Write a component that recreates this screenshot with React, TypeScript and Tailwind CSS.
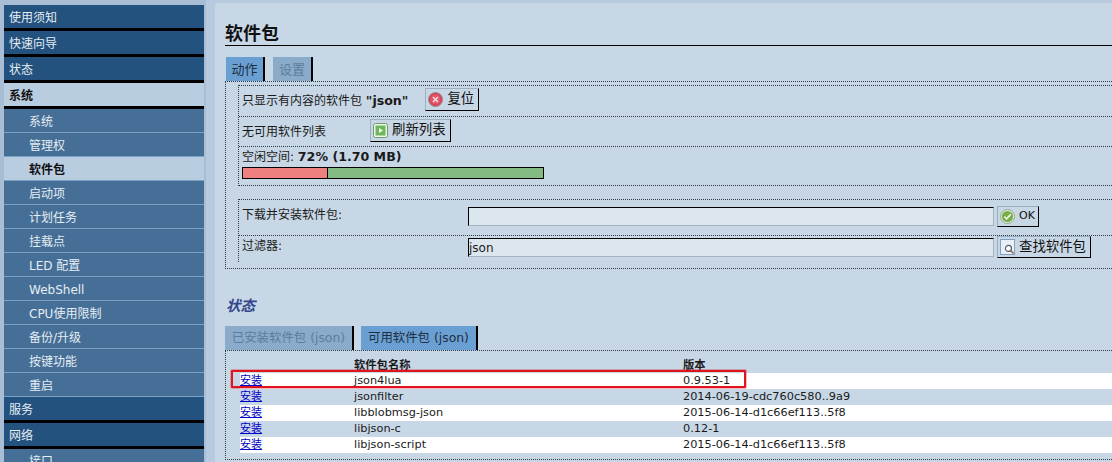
import React from "react";

const FONT = '"DejaVu Sans", "Noto Sans CJK SC", sans-serif';

function Top({ t, active }: { t: string; active?: boolean }) {
  return (
    <div
      className={
        active
          ? "h-[26px] pl-[5px] pt-[2px] flex items-center bg-[#b9cde0] text-[#111] font-bold border-b-[3px] border-black"
          : "h-[26px] pl-[5px] pt-[2px] flex items-center bg-[#24527f] text-[#e6edf4] border-b-[3px] border-black"
      }
    >
      {t}
    </div>
  );
}

function Sub({ t, current }: { t: string; current?: boolean }) {
  return (
    <div
      className={
        "h-[24px] pl-[25px] pt-[2px] flex items-center border-b border-[#7ba0c4] " +
        (current ? "bg-[#b9cde0] text-[#111] font-bold" : "bg-[#456f96] text-[#e6edf4]")
      }
    >
      {t}
    </div>
  );
}

function Sidebar() {
  const items = ["系统", "管理权", "软件包", "启动项", "计划任务", "挂载点", "LED 配置", "WebShell", "CPU使用限制", "备份/升级", "按键功能", "重启"];
  return (
    <div className="w-[215px] shrink-0 h-full overflow-hidden bg-[#b7cadf]">
      <div className="w-[206px] h-full bg-[#a9bed5] pt-[5px] pl-[4px] pr-[2px]">
        <Top t="使用须知" />
        <Top t="快速向导" />
        <Top t="状态" />
        <Top t="系统" active />
        {items.map((t) => (
          <Sub key={t} t={t} current={t === "软件包"} />
        ))}
        <Top t="服务" />
        <Top t="网络" />
        <Sub t="接口" />
      </div>
    </div>
  );
}

function Btn({ icon, label, className }: { icon: React.ReactNode; label: string; className?: string }) {
  return (
    <div
      className={
        "h-[23px] flex items-center gap-[4px] pl-[2px] pr-[4px] bg-[#c8d7e6] border border-[#9db0c2] border-r-black border-b-black text-[#111] text-[13.4px] " +
        (className ?? "")
      }
    >
      {icon}
      <span>{label}</span>
    </div>
  );
}

const RedIcon = (
  <svg width="15" height="15" viewBox="0 0 15 15">
    <circle cx="7.5" cy="7.5" r="7" fill="#d9435a" stroke="#9a8a90" />
    <circle cx="7.5" cy="7.5" r="5" fill="#e2566a" />
    <path d="M5 5l5 5M10 5l-5 5" stroke="#f6dbe0" strokeWidth="1.6" />
  </svg>
);
const GreenPlay = (
  <svg width="15" height="15" viewBox="0 0 15 15">
    <rect x="0.5" y="0.5" width="14" height="14" rx="2" fill="#eef5ea" stroke="#6f9c6a" />
    <rect x="2.5" y="2.5" width="10" height="10" fill="#6cb85a" />
    <path d="M6 5l4 2.5L6 10z" fill="#f4fbef" />
  </svg>
);
const GreenCheck = (
  <svg width="15" height="15" viewBox="0 0 16 16">
    <circle cx="8" cy="8" r="7.5" fill="#e2ecd9" stroke="#8da88a" />
    <circle cx="8" cy="8" r="6" fill="#78ad4b" />
    <path d="M4.6 8l2.4 2.5 4.4-4.8" stroke="#eef6e6" strokeWidth="1.7" fill="none" />
  </svg>
);
const SearchIcon = (
  <svg width="16" height="16" viewBox="0 0 17 17">
    <rect x="0.5" y="0.5" width="15" height="16" fill="#e8eff7" stroke="#7d9cc0" />
    <circle cx="9" cy="10" r="3.2" fill="#fff" stroke="#4d5a68" strokeWidth="1.2" />
    <path d="M11.4 12.4l3 3" stroke="#9a5a2a" strokeWidth="1.6" />
  </svg>
);

function Tab({ t, active, className }: { t: string; active?: boolean; className?: string }) {
  return (
    <div
      className={
        "h-[24px] pt-[1px] flex items-center justify-center border-r-2 border-black " +
        (active ? "bg-[#6a9fd3] text-[#1f2f40] " : "bg-[#8aabc9] text-[#5d7d9c] ") +
        (className ?? "")
      }
    >
      {t}
    </div>
  );
}

const dotted = "border-dotted border-[#2f3a44]";

function Main() {
  const rows = [
    ["json4lua", "0.9.53-1"],
    ["jsonfilter", "2014-06-19-cdc760c580..9a9"],
    ["libblobmsg-json", "2015-06-14-d1c66ef113..5f8"],
    ["libjson-c", "0.12-1"],
    ["libjson-script", "2015-06-14-d1c66ef113..5f8"],
  ];
  return (
    <div className="flex-1 min-w-0 h-full pt-[3px] overflow-hidden">
      <div className="h-full pl-[10px] pt-[19px] bg-[#c8d7e6] rounded-tl-[4px]">
        <h1 className="h-[24px] w-full border-b border-black text-[18px] leading-[24px] font-bold text-[#111]">软件包</h1>

        <div className="flex gap-[8px] pl-[1px] mt-[11px] text-[13px]">
          <Tab t="动作" active className="w-[39px]" />
          <Tab t="设置" className="w-[40px]" />
        </div>

        <div className={"h-[188px] border-t border-l border-b " + dotted + " pl-[12px] pt-[3px]"}>
          <div className={"border-l border-t border-b " + dotted + " h-[101px]"}>
            <div className={"h-[31px] flex items-center pl-[3px] border-b " + dotted}>
              <span>只显示有内容的软件包 <b className="text-[12.6px]">"json"</b></span>
              <Btn icon={RedIcon} label="复位" className="ml-[17px] -mt-[3px]" />
            </div>
            <div className={"h-[30px] flex items-center pl-[3px] border-b " + dotted}>
              <span className="w-[128px]">无可用软件列表</span>
              <Btn icon={GreenPlay} label="刷新列表" className="-mt-[2px]" />
            </div>
            <div className="pl-[3px] pt-[2px]">
              <div className="h-[16px] leading-[16px]">
                空闲空间: <b className="text-[12.6px]">72% (1.70 MB)</b>
              </div>
              <div className="flex w-[302px] h-[12px] mt-[2px] border border-black bg-[#84bb82]">
                <div className="w-[85px] bg-[#ee8080] border-r border-black" />
              </div>
            </div>
          </div>

          <div className={"mt-[13px] border-l " + dotted + " h-[63px]"}>
            <div className={"h-[37px] flex pl-[3px] border-t border-b " + dotted}>
              <span className="w-[226px] pt-[7px] leading-[16px]">下载并安装软件包:</span>
              <div className="w-[526px] h-[19px] mt-[7px] bg-[#dce6ef] border-l border-t border-black border-r border-b border-r-[#a5b3c0] border-b-[#a5b3c0]" />
              <Btn icon={GreenCheck} label="OK" className="ml-[3px] mt-[6px] !text-[11px] !h-[21px] !pr-[3px]" />
            </div>
            <div className="h-[26px] flex pl-[3px]">
              <span className="w-[226px] pt-[2px] leading-[16px]">过滤器:</span>
              <div className="w-[526px] h-[19px] mt-[2px] bg-[#dce6ef] border-l border-t border-black border-r border-b border-r-[#a5b3c0] border-b-[#a5b3c0] leading-[18px]">json</div>
              <Btn icon={SearchIcon} label="查找软件包" className="ml-[3px] !h-[22px] !gap-[3px] !pr-[4px]" />
            </div>
          </div>
        </div>

        <h2 className="mt-[28px] ml-[1px] h-[18px] leading-[18px] text-[14.5px] font-bold italic text-[#33478a]">状态</h2>

        <div className="flex gap-[7px] mt-[11px] text-[12.4px]">
          <Tab t="已安装软件包 (json)" className="w-[129px]" />
          <Tab t="可用软件包 (json)" active className="w-[117px]" />
        </div>

        <div className={"relative h-[110px] border-t border-l border-b " + dotted + " pl-[14px] pt-[7px] text-[11.3px]"}>
          <div className="grid grid-cols-[114px_329px_1fr] h-[15px] leading-[15px] font-bold text-[11.3px]">
            <span />
            <span>软件包名称</span>
            <span>版本</span>
          </div>
          {rows.map((r, i) => (
            <div
              key={r[0]}
              className={"grid grid-cols-[113px_328px_1fr] gap-x-[1px] h-[16px] leading-[15px] " + (i % 2 === 0 ? "bg-white" : "")}
            >
              <a className="text-[#0000c8] underline text-[11px]">安装</a>
              <span>{r[0]}</span>
              <span>{r[1]}</span>
            </div>
          ))}
          <div className="absolute left-[5px] top-[19px] w-[515px] h-[18px] border-2 border-[#e0141e] rounded-[1px] shadow-[0_0_0_1px_rgba(224,20,30,0.3)]" />
        </div>
      </div>
    </div>
  );
}

export default function App() {
  return (
    <div
      className="w-[1112px] h-[462px] flex overflow-hidden bg-[#b7cadf] text-[12px] text-[#1a1a1a]"
      style={{ fontFamily: FONT }}
    >
      <Sidebar />
      <Main />
    </div>
  );
}
